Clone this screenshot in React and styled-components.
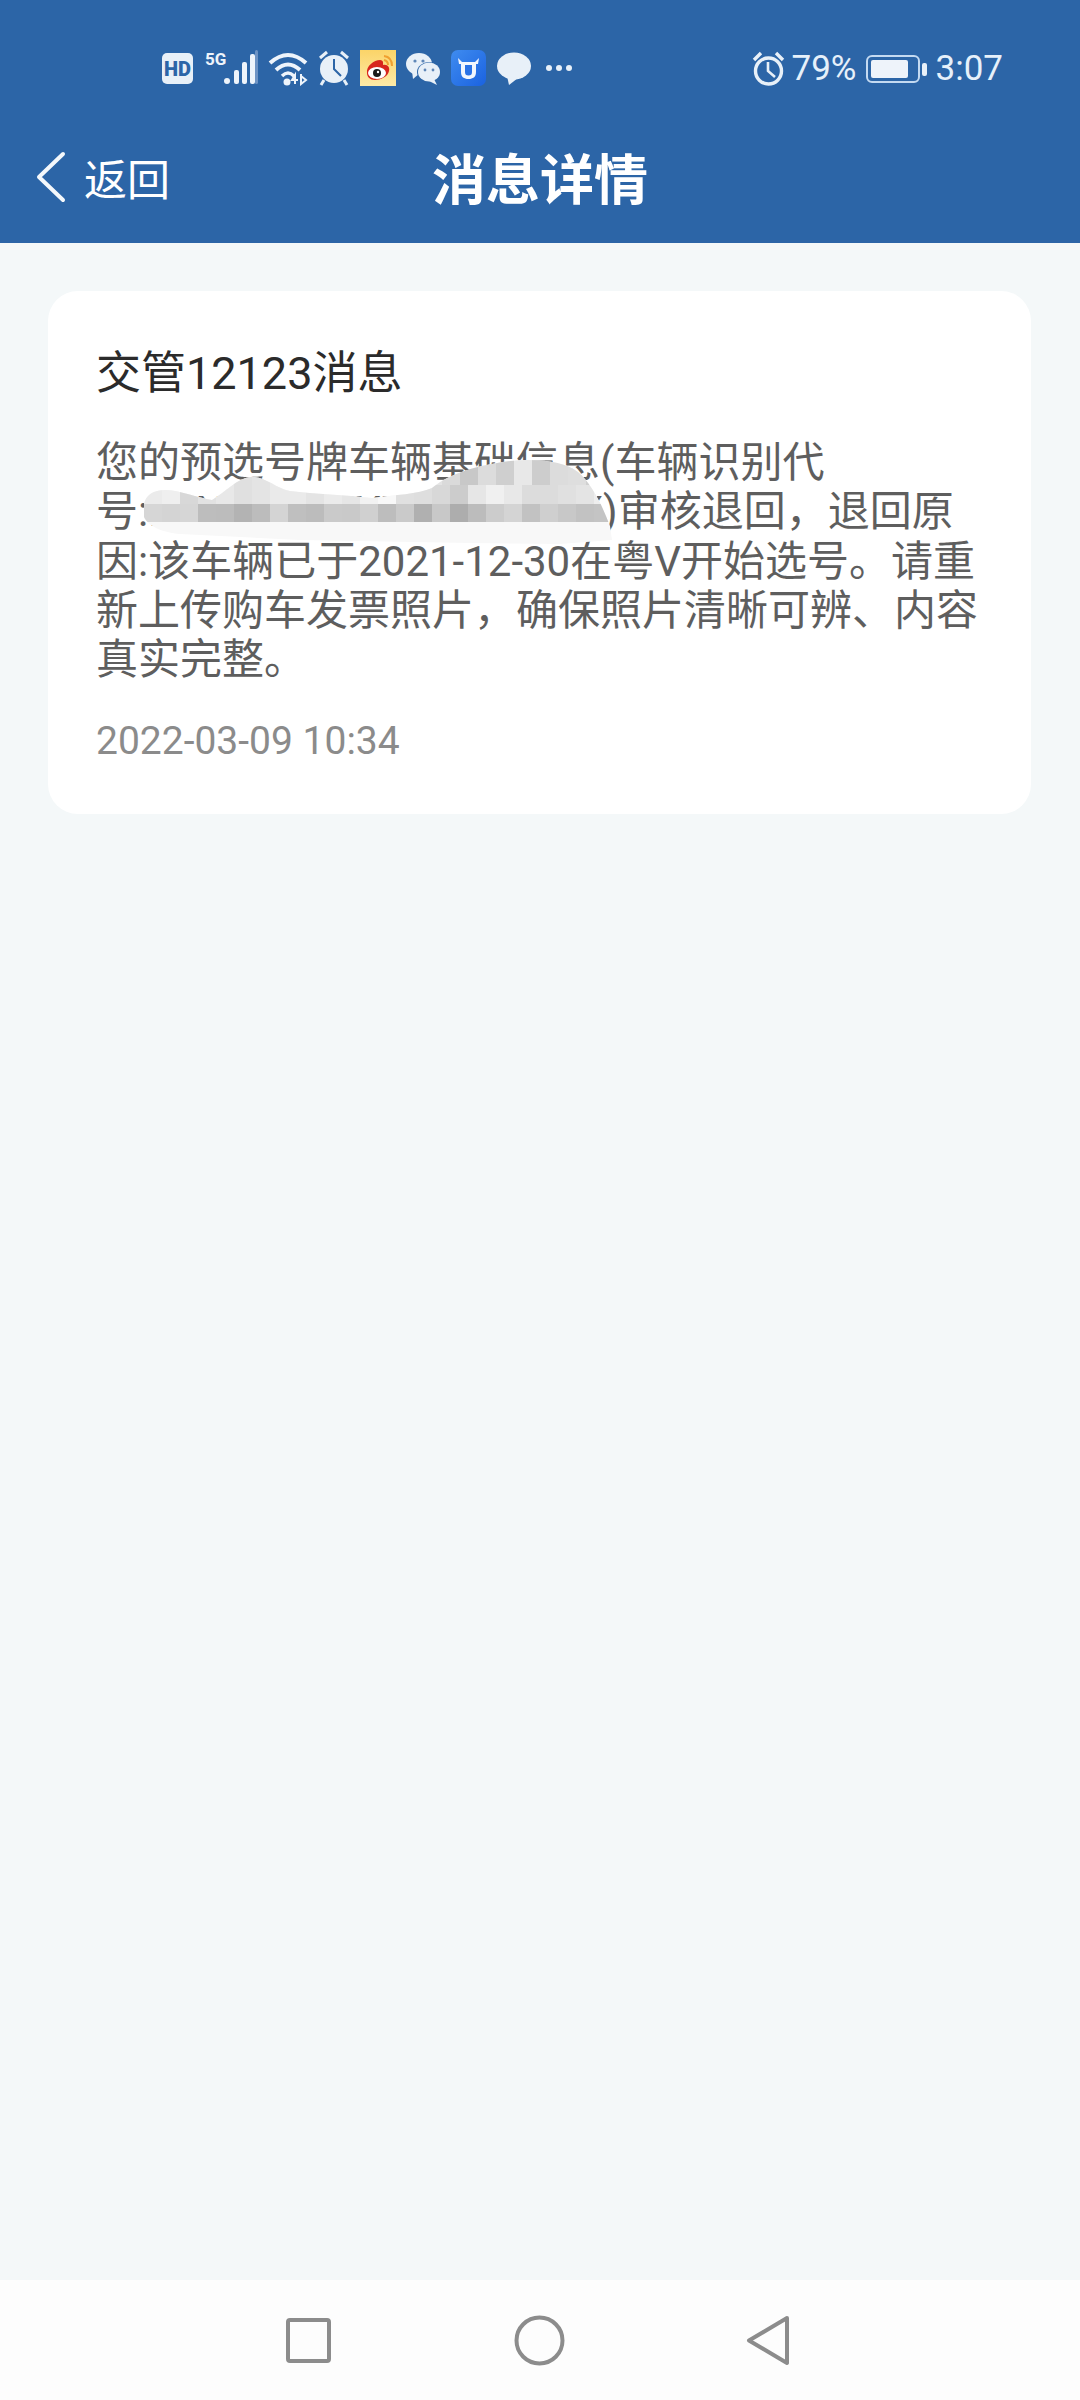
import React from "react";
import styled, { createGlobalStyle } from "styled-components";

const MESSAGE = "您的预选号牌车辆基础信息(车辆识别代号:LXXXXXXXXWXXXXXXX)审核退回\uFF0C退回原因:该车辆已于2021-12-30在粤V开始选号。请重新上传购车发票照片\uFF0C确保照片清晰可辨、内容真实完整。";

const ROW_A = ["#f2f2f2", "#e2e2e2", "#dcdcdc", "#e4e4e4", "#dadada", "#c8c8c8", "#dcdcdc", "#cfcfcf", "#e8e8e8", "#cdcdcd", "#dcdcdc", "#dedede", "#d0d0d0", "#d4d4d4"];
const ROW_B = ["#ebebeb", "#efefef", "#d8d8d8", "#e2e2e2", "#e8e8e8", "#e0e0e0", "#e4e4e4", "#eaeaea", "#eaeaea", "#e4e4e4", "#ebebeb", "#e6e6e6", "#f2f2f2", "#f8f8f8", "#e0e0e0", "#dedede", "#d8d8d8", "#cccccc", "#e6e6e6", "#f0f0f0", "#e8e8e8", "#dcdcdc", "#dcdcdc", "#e0e0e0", "#e4e4e4", "#eeeeee"];
const ROW_C = ["#d6d6d6", "#d4d4d4", "#d6d6d6", "#bdbdbd", "#bcbcbc", "#b3b3b3", "#bcbcbc", "#d4d4d4", "#bfbfbf", "#bcbcbc", "#cacaca", "#c9c9c9", "#d0d0d0", "#bdbdbd", "#cacaca", "#b0b0b0", "#c8c8c8", "#adadad", "#bcbcbc", "#cccccc", "#d4d4d4", "#c2c2c2", "#cfcfcf", "#c8c8c8", "#c2c2c2", "#c4c4c4"];

const GlobalStyle = createGlobalStyle`
    html, body {
        margin: 0;
        padding: 0;
        background: #f4f8f9;
    }
    body {
        font-family: Roboto, "Noto Sans CJK SC", sans-serif;
    }
`;

function HdIcon() {
    return (
        <svg width="31" height="36" viewBox="0 0 31 36">
            <rect x="0" y="3" width="31" height="31" rx="5" fill="#e8f0f8" />
            <text x="15.5" y="25.5" textAnchor="middle" fontSize="20" fontWeight="900" fontFamily="Roboto" fill="#2c65a7">HD</text>
        </svg>
    );
}

function SignalIcon() {
    return (
        <svg width="55" height="36" viewBox="0 0 55 36">
            <text x="2" y="15" fontSize="17" fontWeight="700" fontFamily="Roboto" fill="#eef4fb">5G</text>
            <circle cx="24" cy="31" r="3" fill="#eef4fb" />
            <rect x="31" y="20" width="5" height="14" rx="2" fill="#eef4fb" />
            <rect x="39" y="12" width="5" height="22" rx="2" fill="#eef4fb" />
            <rect x="47" y="4" width="5" height="30" rx="2" fill="#eef4fb" />
            <rect x="52" y="0" width="3" height="34" rx="1.5" fill="#6d93c4" />
        </svg>
    );
}

function WifiIcon() {
    return (
        <svg width="40" height="36" viewBox="0 0 40 36">
            <path d="M2 13 Q20 -3 38 13" fill="none" stroke="#eef4fb" strokeWidth="4" />
            <path d="M8 20 Q20 9 32 20" fill="none" stroke="#eef4fb" strokeWidth="4" />
            <path d="M14 26 Q20 20 26 26" fill="none" stroke="#eef4fb" strokeWidth="3.5" />
            <circle cx="19" cy="32" r="3.5" fill="#eef4fb" />
            <path d="M27 34 L27 25 L24 30 L30 30 M33 24 L33 34 L38 30 L33 26" fill="none" stroke="#eef4fb" strokeWidth="2" />
        </svg>
    );
}

function ClockIcon() {
    return (
        <svg width="32" height="36" viewBox="0 0 32 36">
            <circle cx="16" cy="19" r="14" fill="#e8f0f8" />
            <path d="M16 9 V19 L23 26" fill="none" stroke="#2c65a7" strokeWidth="2" />
            <path d="M2 8 L9 2 M30 8 L23 2" stroke="#e8f0f8" strokeWidth="3" />
            <path d="M6 30 L3 35 M26 30 L29 35" stroke="#e8f0f8" strokeWidth="3" />
        </svg>
    );
}

function WeiboIcon() {
    return (
        <svg width="36" height="36" viewBox="0 0 36 36">
            <defs>
                <linearGradient id="wb" x1="0" y1="0" x2="0" y2="1">
                    <stop offset="0" stopColor="#fbd468" />
                    <stop offset="1" stopColor="#fdeaa8" />
                </linearGradient>
            </defs>
            <rect width="36" height="36" fill="url(#wb)" />
            <path d="M7 23 C6 16 14 10 20 10 C24 10 23 14 23 15 C28 14 30 18 29 21 C28 27 20 30 15 30 C10 30 7 27 7 23 Z" fill="#d8261c" />
            <ellipse cx="17" cy="23" rx="9" ry="6" fill="#fff" />
            <circle cx="17" cy="23" r="4" fill="#1a1a1a" />
            <circle cx="18" cy="22" r="1.2" fill="#fff" />
            <path d="M24 6 Q32 7 32 16 M24 10 Q28 11 28 15" fill="none" stroke="#f0a030" strokeWidth="2" />
        </svg>
    );
}

function WechatIcon() {
    return (
        <svg width="35" height="36" viewBox="0 0 35 36">
            <ellipse cx="13" cy="14" rx="13" ry="11" fill="#e8f0f8" />
            <path d="M6 21 L7 29 L14 23 Z" fill="#e8f0f8" />
            <ellipse cx="23" cy="22" rx="12" ry="10" fill="#2c65a7" />
            <ellipse cx="23" cy="22" rx="11" ry="9.5" fill="#e8f0f8" />
            <path d="M28 29 L31 35 L23 31 Z" fill="#e8f0f8" />
            <circle cx="9" cy="11" r="1.6" fill="#5f87b8" />
            <circle cx="17" cy="11" r="1.6" fill="#5f87b8" />
            <circle cx="19" cy="20" r="1.4" fill="#5f87b8" />
            <circle cx="27" cy="20" r="1.4" fill="#5f87b8" />
        </svg>
    );
}

function CowAppIcon() {
    return (
        <svg width="35" height="36" viewBox="0 0 35 36">
            <defs>
                <linearGradient id="cow" x1="0" y1="0" x2="1" y2="1">
                    <stop offset="0" stopColor="#3f8cf0" />
                    <stop offset="1" stopColor="#1a62e0" />
                </linearGradient>
            </defs>
            <rect width="35" height="36" rx="7" fill="url(#cow)" />
            <path d="M7 8 L11 12 H24 L28 8 L27 14 H25 V22 C25 27 22 29 17.5 29 C13 29 10 27 10 22 V14 H8 Z" fill="#f2f6fd" />
            <path d="M14 15 H21 V22 C21 24.5 20 25.5 17.5 25.5 C15 25.5 14 24.5 14 22 Z" fill="#2a72e6" />
        </svg>
    );
}

function BubbleIcon() {
    return (
        <svg width="35" height="36" viewBox="0 0 35 36">
            <ellipse cx="18" cy="16" rx="17" ry="13.5" fill="#e8f0f8" />
            <path d="M11 26 L13 35 L22 28 Z" fill="#e8f0f8" />
        </svg>
    );
}

function DotsIcon() {
    return (
        <svg width="31" height="36" viewBox="0 0 31 36">
            <circle cx="8" cy="18" r="3" fill="#e8f0f8" />
            <circle cx="18" cy="18" r="3" fill="#e8f0f8" />
            <circle cx="28" cy="18" r="3" fill="#e8f0f8" />
        </svg>
    );
}

function AlarmIcon() {
    return (
        <svg width="33" height="36" viewBox="0 0 33 36">
            <circle cx="16.5" cy="20" r="13" fill="none" stroke="#e8f0f8" strokeWidth="3.4" />
            <path d="M16 11 V20 L23 26" fill="none" stroke="#e8f0f8" strokeWidth="2.6" />
            <path d="M2 9 L9 2 M31 9 L24 2" stroke="#e8f0f8" strokeWidth="3.4" />
        </svg>
    );
}

function BatteryIcon() {
    return (
        <svg width="61" height="28" viewBox="0 0 61 28">
            <rect x="1" y="1" width="52" height="26" rx="5" fill="none" stroke="#c4daf2" strokeWidth="2" />
            <rect x="5" y="5" width="37" height="18" rx="2" fill="#eef3fa" />
            <rect x="56" y="8" width="5" height="13" rx="2" fill="#e8f0f8" />
        </svg>
    );
}

function Mosaic() {
    return (
        <MosaicMask viewBox="144 456 470 90" width="470" height="90">
            <defs>
                <clipPath id="blob">
                    <path d="M143 512 C143 498 150 490 165 490 C180 490 198 498 212 500 C225 492 238 478 250 477 C265 476 275 488 290 491 C315 494 345 495 372 498 C395 495 418 494 432 488 C445 477 470 466 510 461 C540 458 565 462 578 472 C592 484 602 505 610 526 L612 540 L560 544 L470 543 L300 540 L180 534 C160 532 143 524 143 512 Z" />
                </clipPath>
            </defs>
            <g clipPath="url(#blob)">
                <rect x="144" y="456" width="470" height="90" fill="#f8f8f8" />
                {ROW_A.map((c, i) => <rect key={i} x={370 + i * 18} y="456" width="18" height="29" fill={c} />)}
                {ROW_B.map((c, i) => <rect key={i} x={144 + i * 18} y="470" width="18" height="34" fill={c} />).slice(0, 13)}
                {ROW_B.map((c, i) => <rect key={i} x={144 + i * 18} y="485" width="18" height="19" fill={c} />).slice(13)}
                {ROW_C.map((c, i) => <rect key={i} x={144 + i * 18} y="504" width="18" height="18" fill={c} />)}
            </g>
        </MosaicMask>
    );
}

function App() {
    return (
        <Page>
            <GlobalStyle />
            <Header>
                <StatusBar>
                    <StatusIcons>
                        <HdIcon />
                        <SignalIcon />
                        <WifiIcon />
                        <ClockIcon />
                        <WeiboIcon />
                        <WechatIcon />
                        <CowAppIcon />
                        <BubbleIcon />
                        <DotsIcon />
                    </StatusIcons>
                    <StatusRight>
                        <AlarmIcon />
                        <StatusText $offset={-2}>79%</StatusText>
                        <BatteryIcon />
                        <StatusText>3:07</StatusText>
                    </StatusRight>
                </StatusBar>
                <NavBar>
                    <BackButton>
                        <svg width="30" height="52" viewBox="0 0 30 52">
                            <path d="M27 3 L3 26 L27 49" fill="none" stroke="#f4f8fc" strokeWidth="4" strokeLinecap="round" strokeLinejoin="round" />
                        </svg>
                        <BackText>返回</BackText>
                    </BackButton>
                    <Title>消息详情</Title>
                </NavBar>
            </Header>
            <Main>
                <Card>
                    <CardTitle>交管12123消息</CardTitle>
                    <CardBody>{MESSAGE}</CardBody>
                    <CardDate>2022-03-09 10:34</CardDate>
                    <Mosaic />
                </Card>
            </Main>
            <BottomNav>
                <svg width="47" height="47" viewBox="0 0 47 47">
                    <rect x="3" y="3" width="41" height="41" rx="2" fill="none" stroke="#8c8c8c" strokeWidth="4" />
                </svg>
                <svg width="51" height="51" viewBox="0 0 51 51">
                    <circle cx="25.5" cy="25.5" r="23" fill="none" stroke="#8c8c8c" strokeWidth="4" />
                </svg>
                <svg width="44" height="51" viewBox="0 0 44 51">
                    <path d="M41 3 L3 25.5 L41 48 Z" fill="none" stroke="#8c8c8c" strokeWidth="4" strokeLinejoin="round" />
                </svg>
            </BottomNav>
        </Page>
    );
}

const Page = styled.div`
    width: 1080px;
    height: 2400px;
    display: flex;
    flex-direction: column;
    background: #f4f8f9;
    overflow: hidden;
`;
const Header = styled.header`
    height: 243px;
    background: #2c65a7;
    color: #fff;
    display: flex;
    flex-direction: column;
`;
const StatusBar = styled.div`
    height: 110px;
    padding: 50px 77px 0 162px;
    box-sizing: border-box;
    display: flex;
    justify-content: space-between;
    align-items: flex-start;
`;
const StatusIcons = styled.div`
    display: flex;
    gap: 10px;
    align-items: center;
`;
const StatusRight = styled.div`
    display: flex;
    align-items: center;
    gap: 9px;
    height: 36px;
    padding-top: 1px;
    margin-left: auto;
`;
const StatusText = styled.span`
    font-size: 35px;
    line-height: 38px;
    color: #e6f0fa;
    margin-left: ${(props) => props.$offset || 0}px;
`;
const NavBar = styled.div`
    flex: 1;
    display: grid;
    grid-template-columns: 1fr auto 1fr;
    align-items: center;
`;
const BackButton = styled.div`
    display: flex;
    align-items: center;
    gap: 18px;
    padding-left: 36px;
`;
const BackText = styled.span`
    font-size: 43px;
    color: #fff;
`;
const Title = styled.h1`
    margin: 0;
    font-size: 54px;
    font-weight: 700;
    color: #fff;
`;
const Main = styled.main`
    flex: 1;
    padding: 48px 49px 0 48px;
`;
const Card = styled.section`
    position: relative;
    background: #fff;
    border-radius: 30px;
    padding: 53px 46px 48px 48px;
`;
const CardTitle = styled.h2`
    margin: 0;
    font-size: 45px;
    line-height: 60px;
    font-weight: 400;
    color: #2b2b2b;
`;
const CardBody = styled.p`
    margin: 34px 0 0;
    font-size: 42px;
    line-height: 49.3px;
    color: #5e5e5e;
`;
const CardDate = styled.div`
    margin-top: 32px;
    font-size: 39px;
    line-height: 50px;
    color: #8b8b8b;
`;
const MosaicMask = styled.svg`
    position: absolute;
    left: 96px;
    top: 165px;
`;
const BottomNav = styled.nav`
    height: 120px;
    background: #fdfdfd;
    display: flex;
    justify-content: space-between;
    align-items: center;
    padding: 0 290px 0 285px;
`;

export default App;
